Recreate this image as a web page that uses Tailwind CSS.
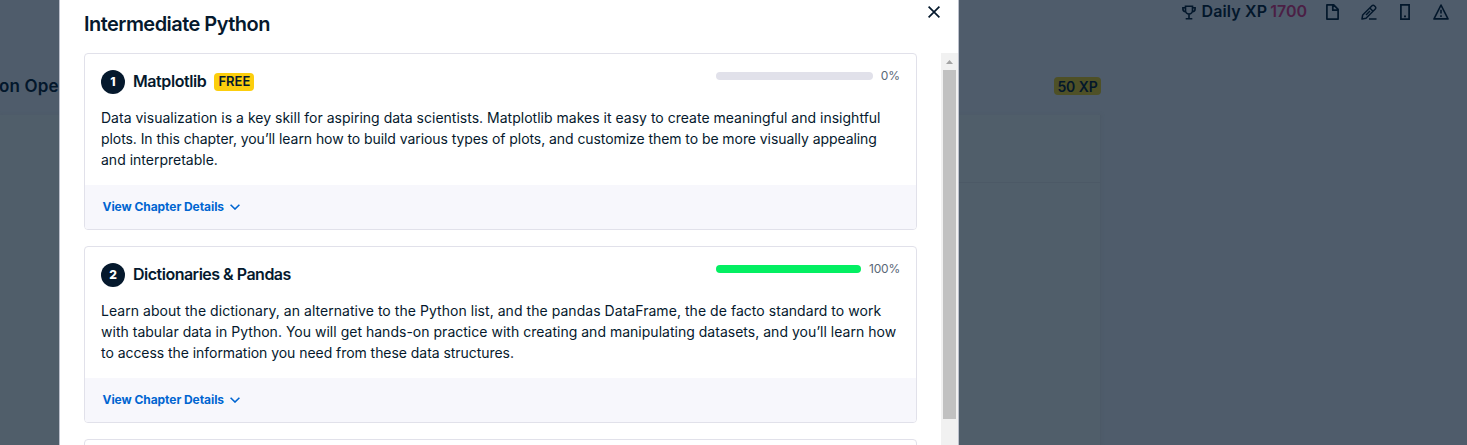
<!DOCTYPE html>
<html lang="en">
<head>
<meta charset="utf-8">
<title>Intermediate Python</title>
<script src="https://cdn.jsdelivr.net/npm/@tailwindcss/browser@4"></script>
</head>
<body class="relative h-[445px] w-[1467px] overflow-hidden bg-[#4f5c6b] font-['Inter',sans-serif] text-[#05192d]">
<header class="flex h-6 items-center justify-end pr-[18px] text-[#03172b]">
  <svg class="mr-[5px] h-[15px] w-[14px]" viewBox="0 0 14 15" fill="none" stroke="currentColor" stroke-width="1.6"><path d="M3.500 1.200h7v4.300a3.500 3.500 0 0 1-7 0zM3.500 2.700H.9v1.200c0 1.600 1 2.600 2.800 2.800M10.500 2.700h2.600v1.200c0 1.600-1 2.600-2.800 2.800M7 9v4.500M3.700 13.800h6.600"/></svg>
  <span class="mr-[3px] pb-0.5 text-base leading-[22px] font-semibold tracking-[0.15px] whitespace-nowrap">Daily XP</span>
  <span class="mr-[19px] pb-0.5 text-base leading-[22px] font-semibold whitespace-nowrap text-[#4b1f45]">1700</span>
  <svg class="mr-[22px] h-4 w-[13px]" viewBox="0 0 13 16" fill="none" stroke="currentColor" stroke-width="1.7" stroke-linejoin="round"><path d="M.9.900h6.800l4.400 4.400v9.800H.9zM6.800.900v5.300h5.300"/></svg>
  <svg class="mr-[23px] h-4 w-4" viewBox="0 0 16 16" fill="none" stroke="currentColor" stroke-width="1.5" stroke-linejoin="round"><path d="M1 15l.7-4L11 1.700a1.600 1.600 0 0 1 2.300 0l1 1a1.600 1.600 0 0 1 0 2.300L5 14.300zM8.800 4l3.200 3.200M5 11l4-4M8 15.100h7.500"/></svg>
  <svg class="mr-[23px] h-4 w-[10px]" viewBox="0 0 10 16" fill="none" stroke="currentColor" stroke-width="1.700"><path d="M.9.900h8.200v14.200H.9zM4 12.300h2"/></svg>
  <svg class="h-4 w-4" viewBox="0 0 16 15" preserveAspectRatio="none" fill="none" stroke="currentColor" stroke-width="1.600" stroke-linejoin="round"><path d="M8 1l7 13H1zM8 5.500v3.500M8 10.500v1.700"/></svg>
</header>
<div class="flex h-[91px] items-start justify-between pt-[50px] pr-[366px]">
  <h2 class="-ml-px text-[17px] leading-6 font-semibold tracking-[0.15px] whitespace-nowrap text-[#03172b]">on Ope</h2>
  <span class="mt-[3px] flex h-[18px] w-[47px] items-center justify-center rounded bg-[#4e5026] text-[14px] font-semibold text-[#03172b]"><span class="tracking-[-0.1px] whitespace-nowrap">50 XP</span></span>
</div>
<div class="mr-[366px] h-[330px] border-r border-[#4c5967] bg-[#505e6a] shadow-[0_0_3px_#4c5967]">
  <div class="ml-[500px] h-[68px] border-b border-[#4c5966]"></div>
</div>

<main class="absolute top-0 left-[59px] flex h-[445px] w-[900px] flex-col overflow-hidden border-x border-[#bcc0cc] bg-white">
  <div class="flex h-[53px] shrink-0 justify-between pr-[18px] pl-6">
    <h1 class="pt-3 text-[20px] leading-6 font-semibold tracking-[-0.54px] whitespace-nowrap">Intermediate Python</h1>
    <svg class="mt-[6px] h-3 w-3" viewBox="0 0 12 12" fill="none" stroke="currentColor" stroke-width="1.700"><path d="M.6.600l10.800 10.800M11.400.600L.6 11.400"/></svg>
  </div>
  <div class="flex min-h-0 flex-1 justify-between">
    <div class="flex w-[857px] flex-col gap-4 pl-6">
      <section class="flex h-[177px] w-[833px] shrink-0 flex-col overflow-hidden rounded-[4px] border border-[#e1e1ea]">
        <div class="flex h-[131px] flex-col px-4">
          <div class="flex h-[53px] items-start justify-between">
            <div class="flex items-center pt-4">
              <span class="flex size-6 items-center justify-center rounded-full bg-[#05192d] text-[12px] font-extrabold text-white">1</span>
              <h3 class="ml-2 pb-0.5 text-base leading-[22px] font-semibold tracking-[-0.42px] whitespace-nowrap">Matplotlib</h3>
              <span class="ml-2 flex h-[18px] w-10 items-center justify-center rounded bg-[#fcce0d] text-[13px] font-semibold">FREE</span>
            </div>
            <div class="flex items-center pt-3 text-[12px] leading-5 text-[#5a6877]"><span class="mr-2 h-2 w-[157px] rounded-full bg-[#e1e1ea]"></span>0%</div>
          </div>
          <p class="text-[14px] leading-[21px] whitespace-nowrap"><span class="tracking-[0.01px]">Data visualization is a key skill for aspiring data scientists. Matplotlib makes it easy to create meaningful and insightful</span><br><span class="tracking-[-0.07px]">plots. In this chapter, you’ll learn how to build various types of plots, and customize them to be more visually appealing</span><br>and interpretable.</p>
        </div>
        <div class="flex flex-1 items-center bg-[#f7f7fc] pl-[17.5px] text-[12px] font-bold text-[#0065d1]"><span class="tracking-[-0.06px] whitespace-nowrap">View Chapter Details</span><svg class="ml-[6px] h-[6px] w-[10px]" viewBox="0 0 10 6" fill="none" stroke="currentColor" stroke-width="1.600"><path d="M.6.700L5 5 9.400.700"/></svg></div>
      </section>
      <section class="flex h-[177px] w-[833px] shrink-0 flex-col overflow-hidden rounded-[4px] border border-[#e1e1ea]">
        <div class="flex h-[131px] flex-col px-4">
          <div class="flex h-[53px] items-start justify-between">
            <div class="flex items-center pt-4">
              <span class="flex size-6 items-center justify-center rounded-full bg-[#05192d] text-[12px] font-extrabold text-white">2</span>
              <h3 class="ml-2 pb-0.5 text-base leading-[22px] font-semibold tracking-[-0.5px] whitespace-nowrap">Dictionaries &amp; Pandas</h3>
            </div>
            <div class="flex items-center pt-3 text-[12px] leading-5 text-[#5a6877]"><span class="mr-2 h-2 w-[145px] rounded-full bg-[#03ef62]"></span><span class="tracking-[-0.2px]">100%</span></div>
          </div>
          <p class="text-[14px] leading-[21px] whitespace-nowrap"><span class="tracking-[0.045px]">Learn about the dictionary, an alternative to the Python list, and the pandas DataFrame, the de facto standard to work</span><br><span class="tracking-[0.015px]">with tabular data in Python. You will get hands-on practice with creating and manipulating datasets, and you’ll learn how</span><br><span class="tracking-[-0.05px]">to access the information you need from these data structures.</span></p>
        </div>
        <div class="flex flex-1 items-center bg-[#f7f7fc] pl-[17.5px] text-[12px] font-bold text-[#0065d1]"><span class="tracking-[-0.06px] whitespace-nowrap">View Chapter Details</span><svg class="ml-[6px] h-[6px] w-[10px]" viewBox="0 0 10 6" fill="none" stroke="currentColor" stroke-width="1.600"><path d="M.6.700L5 5 9.400.700"/></svg></div>
      </section>
      <section class="h-[177px] w-[833px] shrink-0 rounded-[4px] border border-[#e1e1ea]"></section>
    </div>
    <div class="flex w-[17px] flex-col bg-[#f1f1f1] pl-[2px]">
      <svg class="h-[17px] w-[13px] shrink-0" viewBox="0 0 13 17"><path d="M3 11h7L6.500 7z" fill="#a3a3a3"/></svg>
      <div class="h-[349px] w-[13px] bg-[#c1c1c1]"></div>
    </div>
  </div>
</main>
</body>
</html>
